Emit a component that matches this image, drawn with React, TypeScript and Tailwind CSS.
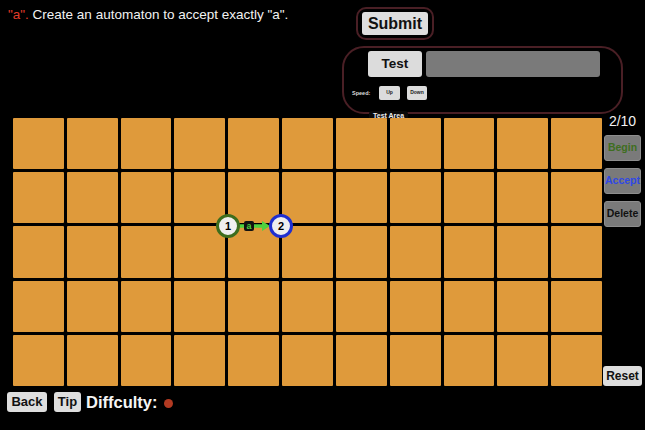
import React from "react";

const font = { fontFamily: '"Liberation Sans", Arial, sans-serif' };

function State({ n, color }: { n: string; color: "green" | "blue" }) {
  return (
    <div
      className={
        "w-[24px] h-[24px] rounded-full bg-[#efefef] flex items-center justify-center border-[3px] " +
        (color === "green" ? "border-[#3d6d1d]" : "border-[#1f2fd0]")
      }
    >
      <span className="text-[11px] font-bold text-black leading-none">{n}</span>
    </div>
  );
}

export default function App() {
  const cells = Array.from({ length: 55 });
  return (
    <div className="w-[645px] h-[430px] bg-black overflow-hidden flex flex-col" style={font}>
      {/* Top */}
      <div className="h-[118px] flex">
        <div className="flex-1 pl-[8px] pt-[8px] text-[13.5px] leading-none text-[#f2f2f2]">
          <span className="text-[#e23b2a]">"a".</span> Create an automaton to accept exactly "a".
        </div>
        <div className="w-[281px] mr-[22px] pt-[7px] flex flex-col">
          <div className="ml-[14px] w-[78px] h-[33px] rounded-[10px] border-2 border-[#4a1f25] flex items-center justify-center">
            <div className="w-[66px] h-[23px] rounded-[3px] bg-[#dedede] flex items-center justify-center text-[16px] font-bold text-[#111]">
              Submit
            </div>
          </div>
          <div className="relative mt-[6px] h-[68px] rounded-[22px] border-2 border-[#4a1f25] pt-[3px] pl-[24px]">
            <div className="flex gap-[4px]">
              <div className="w-[54px] h-[26px] rounded-[3px] bg-[#dcdcdc] flex items-center justify-center text-[13.5px] font-bold text-[#111]">
                Test
              </div>
              <div className="w-[174px] h-[26px] rounded-[3px] bg-[#7a7a7a]" />
            </div>
            <div className="flex items-center mt-[9px] -ml-[16px]">
              <span className="text-[5.5px] font-bold text-[#ddd] w-[27px]">Speed:</span>
              <div className="w-[21px] h-[14px] rounded-[2px] bg-[#dcdcdc] flex items-center justify-center text-[5px] font-bold text-[#222]">
                Up
              </div>
              <div className="ml-[7px] w-[20px] h-[14px] rounded-[2px] bg-[#dcdcdc] flex items-center justify-center text-[5px] font-bold text-[#222]">
                Down
              </div>
            </div>
            <div className="absolute left-[25px] -bottom-[8px] px-[4px] h-[9px] rounded-t-[3px] bg-[#0a0a0a] flex items-center text-[7px] font-bold text-[#eee] leading-none">
              Test Area
            </div>
          </div>
        </div>
      </div>

      {/* Middle */}
      <div className="flex h-[268px]">
        <div className="relative ml-[13px] w-[589px] h-[268px]">
          <div className="grid grid-cols-11 grid-rows-5 gap-[3px] w-full h-full">
            {cells.map((_, i) => (
              <div key={i} className="bg-[#df9a3b] rounded-[1px]" />
            ))}
          </div>
          {/* edge a */}
          <div className="absolute left-[226px] top-[101px] w-[32px] h-[14px] flex items-center">
            <svg width="32" height="14" viewBox="0 0 32 14">
              <line x1="0" y1="7" x2="24" y2="7" stroke="#4fd23f" strokeWidth="3.5" />
              <polygon points="23,2 31,7 23,12" fill="#4fd23f" />
            </svg>
          </div>
          <div className="absolute left-[231px] top-[103px] w-[10px] h-[10px] rounded-[2px] bg-[#111] flex items-center justify-center text-[9px] font-bold text-[#4fd23f] leading-none">
            a
          </div>
          <div className="absolute left-[203px] top-[96px]">
            <State n="1" color="green" />
          </div>
          <div className="absolute left-[256px] top-[96px]">
            <State n="2" color="blue" />
          </div>
        </div>
        <div className="ml-[1px] w-[39px] -mt-[5px] h-[273px] flex flex-col items-center">
          <div className="text-[14px] leading-[17px] text-[#f2f2f2]">2/10</div>
          <div className="mt-[5px] w-[37px] h-[26px] rounded-[3px] bg-[#7a7a7a] border border-[#8e8e8e] flex items-center justify-center text-[10.5px] font-bold text-[#3e6e20]">
            Begin
          </div>
          <div className="mt-[7px] w-[37px] h-[26px] rounded-[3px] bg-[#7a7a7a] border border-[#8e8e8e] flex items-center justify-center text-[10.5px] font-bold text-[#3048e6]">
            Accept
          </div>
          <div className="mt-[7px] w-[37px] h-[26px] rounded-[3px] bg-[#7a7a7a] border border-[#8e8e8e] flex items-center justify-center text-[10.5px] font-bold text-[#111]">
            Delete
          </div>
          <div className="mt-auto w-[39px] h-[20px] rounded-[3px] bg-[#dedede] flex items-center justify-center text-[12px] font-bold text-[#111]">
            Reset
          </div>
        </div>
      </div>

      {/* Bottom */}
      <div className="mt-[6px] flex items-center">
        <div className="ml-[7px] w-[40px] h-[20px] rounded-[3px] bg-[#dedede] flex items-center justify-center text-[13px] font-bold text-[#111]">
          Back
        </div>
        <div className="ml-[7px] w-[27px] h-[20px] rounded-[3px] bg-[#dedede] flex items-center justify-center text-[13px] font-bold text-[#111]">
          Tip
        </div>
        <div className="ml-[5px] text-[16.5px] font-bold text-[#f5f5f5] leading-none">Diffculty:</div>
        <div className="ml-[6px] mt-[3px] w-[9px] h-[9px] rounded-full bg-[#b23a22]" />
      </div>
    </div>
  );
}
